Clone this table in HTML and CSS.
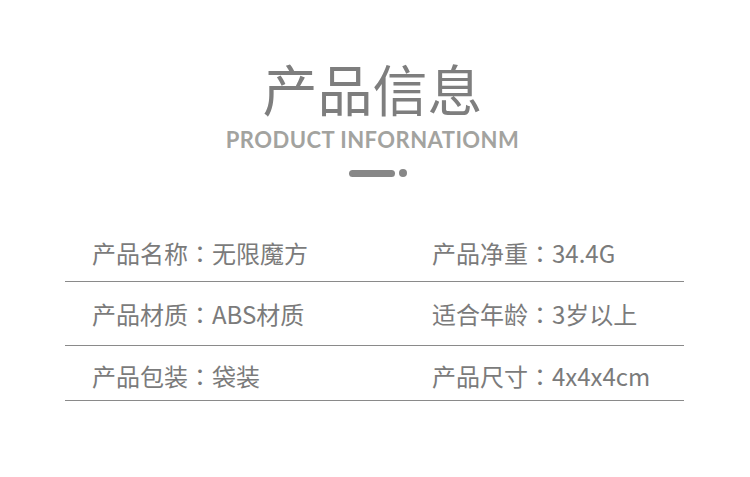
FILE: index.html
```html
<!DOCTYPE html>
<html lang="zh-CN">
<head>
<meta charset="utf-8">
<title>产品信息</title>
<link rel="stylesheet" href="styles.css">
</head>
<body>
<div class="page">
  <header class="head">
    <h1 class="title">产品信息</h1>
    <div class="subtitle">PRODUCT INFORNATIONM</div>
    <div class="divider"><span class="pill"></span><span class="dot"></span></div>
  </header>
  <div class="table">
    <div class="row row-1">
      <div class="cell">产品名称<span class="colon" lang="zh-TW">：</span>无限魔方</div>
      <div class="cell">产品净重<span class="colon" lang="zh-TW">：</span>34.4G</div>
    </div>
    <div class="row row-2">
      <div class="cell">产品材质<span class="colon" lang="zh-TW">：</span>ABS材质</div>
      <div class="cell">适合年龄<span class="colon" lang="zh-TW">：</span>3岁以上</div>
    </div>
    <div class="row row-3">
      <div class="cell">产品包装<span class="colon" lang="zh-TW">：</span>袋装</div>
      <div class="cell">产品尺寸<span class="colon" lang="zh-TW">：</span>4x4x4cm</div>
    </div>
  </div>
</div>
</body>
</html>
```
FILE: styles.css
```css
* { box-sizing: border-box; }
html, body { margin: 0; padding: 0; background: #ffffff; }
.page {
  width: 750px;
  height: 477px;
  font-family: "Noto Sans CJK SC", "Noto Sans", sans-serif;
  padding-top: 53px;
}
.head {
  display: flex;
  flex-direction: column;
  align-items: center;
  padding-right: 5px;
}
.title {
  margin: 0;
  font-size: 55px;
  line-height: 68px;
  font-weight: 400;
  color: #7e7e7e;
}
.subtitle {
  margin-top: 7px;
  font-family: "Lato", "Open Sans", sans-serif;
  font-weight: 700;
  font-size: 22px;
  line-height: 24px;
  color: #a3a39f;
  letter-spacing: 0.45px;
}
.divider {
  margin-top: 17px;
  display: flex;
  align-items: center;
  gap: 4px;
  padding-left: 10px;
}
.pill {
  width: 46px;
  height: 7px;
  border-radius: 4px;
  background: #878787;
}
.dot {
  width: 8px;
  height: 8px;
  border-radius: 50%;
  background: #878787;
}
.table {
  margin: 64px 0 0 65px;
  width: 619px;
}
.row {
  display: grid;
  grid-template-columns: 340px 279px;
  border-bottom: 1px solid #8a8a8a;
  font-size: 24px;
  line-height: 24px;
  color: #7b7b7b;
}
.cell { padding-left: 27px; white-space: nowrap; }
.colon { font-family: "Noto Sans CJK TC", "Noto Sans CJK SC", sans-serif; }
.row-1 { padding-top: 0; padding-bottom: 16px; }
.row-2 { padding-top: 20px; padding-bottom: 19px; }
.row-3 { padding-top: 18px; padding-bottom: 12px; }
```
